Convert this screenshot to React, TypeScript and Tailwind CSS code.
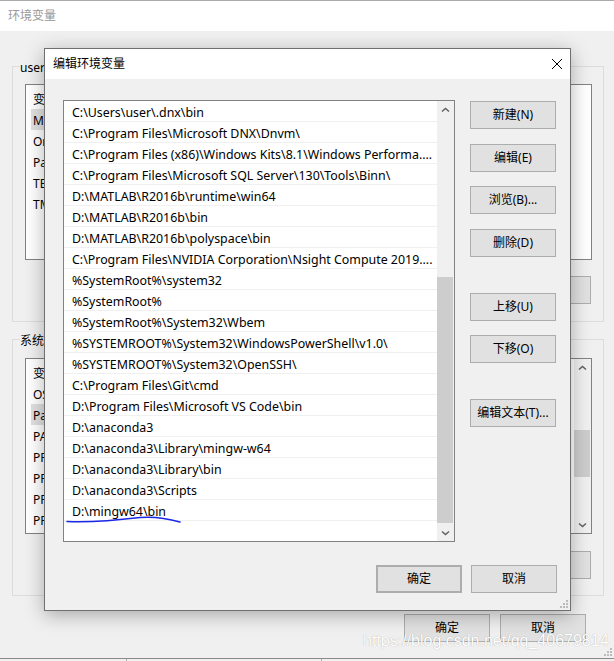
import React from 'react';

const paths = [
  'C:\\Users\\user\\.dnx\\bin',
  'C:\\Program Files\\Microsoft DNX\\Dnvm\\',
  'C:\\Program Files (x86)\\Windows Kits\\8.1\\Windows Performa....',
  'C:\\Program Files\\Microsoft SQL Server\\130\\Tools\\Binn\\',
  'D:\\MATLAB\\R2016b\\runtime\\win64',
  'D:\\MATLAB\\R2016b\\bin',
  'D:\\MATLAB\\R2016b\\polyspace\\bin',
  'C:\\Program Files\\NVIDIA Corporation\\Nsight Compute 2019....',
  '%SystemRoot%\\system32',
  '%SystemRoot%',
  '%SystemRoot%\\System32\\Wbem',
  '%SYSTEMROOT%\\System32\\WindowsPowerShell\\v1.0\\',
  '%SYSTEMROOT%\\System32\\OpenSSH\\',
  'C:\\Program Files\\Git\\cmd',
  'D:\\Program Files\\Microsoft VS Code\\bin',
  'D:\\anaconda3',
  'D:\\anaconda3\\Library\\mingw-w64',
  'D:\\anaconda3\\Library\\bin',
  'D:\\anaconda3\\Scripts',
  'D:\\mingw64\\bin',
];

const userVars: [string, string][] = [
  ['变量', '值'],
  ['MOZ_PLUGIN_PATH', 'C:\\Program Files (x86)\\Foxit Software\\plugins\\'],
  ['OneDrive', 'C:\\Users\\user\\OneDrive'],
  ['Path', 'C:\\Users\\user\\.dnx\\bin;C:\\Program Files\\Microsoft DNX\\Dnvm\\'],
  ['TEMP', 'C:\\Users\\user\\AppData\\Local\\Temp'],
  ['TMP', 'C:\\Users\\user\\AppData\\Local\\Temp'],
];

const sysVars: [string, string][] = [
  ['变量', '值'],
  ['OS', 'Windows_NT'],
  ['Path', 'C:\\Users\\user\\.dnx\\bin;C:\\Program Files\\Microsoft DNX\\'],
  ['PATHEXT', '.COM;.EXE;.BAT;.CMD;.VBS;.VBE;.JS;.JSE;.WSF;.WSH;.MSC'],
  ['PROCESSOR_ARCHITECTURE', 'AMD64'],
  ['PROCESSOR_IDENTIFIER', 'Intel64 Family 6 Model 158 Stepping 10'],
  ['PROCESSOR_LEVEL', '6'],
  ['PROCESSOR_REVISION', '9e0a'],
];

function Chevron({ down }: { down?: boolean }) {
  return (
    <svg width="9" height="6" viewBox="0 0 9 6">
      <path
        d={down ? 'M1 1.5 L4.5 4.5 L8 1.5' : 'M1 4.5 L4.5 1.5 L8 4.5'}
        fill="none"
        stroke="#606060"
        strokeWidth="1.5"
      />
    </svg>
  );
}

function Scrollbar({ thumb }: { thumb: string }) {
  return (
    <div className="w-[17px] h-full flex flex-col bg-[#f0f0f0]">
      <div className="h-[17px] flex items-center justify-center">
        <Chevron />
      </div>
      <div className="flex-1 flex flex-col">
        <div className={`bg-[#cdcdcd] mr-[1px] ${thumb}`} />
      </div>
      <div className="h-[17px] flex items-center justify-center">
        <Chevron down />
      </div>
    </div>
  );
}

function WinButton({ label, className = '' }: { label: string; className?: string }) {
  return (
    <div
      className={`w-[86px] h-[28px] flex items-center justify-center bg-[#e1e1e1] border border-[#adadad] whitespace-nowrap ${className}`}
    >
      {label}
    </div>
  );
}

// the background list only shows its first column's first letters; the rest sits under the dialog
function VarList({ rows, selected, scroll }: { rows: [string, string][]; selected: number; scroll?: boolean }) {
  return (
    <div className="h-[176px] border border-[#828282] bg-white flex overflow-hidden">
      <div className="flex-1 pt-[3px] flex flex-col">
        {rows.map(([name, value], i) => (
          <div key={i} className="h-[21px] flex items-center ml-[5px] whitespace-nowrap">
            <span
              className={`w-[180px] h-full flex items-center pl-[2px] pt-[2px] ${i === selected ? 'bg-[#e0e0e0]' : ''}`}
            >
              {name}
            </span>
            <span className="pl-[6px] pt-[2px]">{value}</span>
          </div>
        ))}
      </div>
      {scroll && <Scrollbar thumb="mt-[54px] h-[47px]" />}
    </div>
  );
}

function GroupBox({ label, children, className }: { label: string; children: React.ReactNode; className: string }) {
  return (
    <div className={`relative border border-[#dcdcdc] flex flex-col pl-[12px] pr-[11px] ${className}`}>
      <span className="absolute -top-[8px] left-[7px] leading-[17px] bg-[#f0f0f0] pr-[2px]">{label}</span>
      {children}
    </div>
  );
}

function BackgroundWindow() {
  return (
    <div className="flex flex-col h-full">
      <div className="h-[31px] bg-white border-t border-[#aaaaaa] flex items-center pl-[8px] text-[#999999]">
        环境变量
      </div>
      <div className="flex flex-col pl-[12px] pr-[10px] pt-[35px]">
        <GroupBox label="user 的用户变量(U)" className="h-[256px] pt-[17px]">
          <VarList rows={userVars} selected={1} />
          <div className="flex justify-end gap-[9px] mt-[16px] mr-[1px]">
            <WinButton label="新建(N)..." />
            <WinButton label="编辑(E)..." />
            <WinButton label="删除(D)" />
          </div>
        </GroupBox>
        <GroupBox label="系统变量(S)" className="h-[257px] pt-[18px] mt-[17px]">
          <VarList rows={sysVars} selected={2} scroll />
          <div className="flex justify-end gap-[9px] mt-[17px] mr-[1px]">
            <WinButton label="新建(W)..." />
            <WinButton label="编辑(I)..." />
            <WinButton label="删除(L)" />
          </div>
        </GroupBox>
        <div className="flex justify-end gap-[10px] mt-[18px] pr-[18px]">
          <WinButton label="确定" />
          <WinButton label="取消" />
        </div>
      </div>
      <div className="mt-[16px] flex-1 border-t border-[#8a8a8a] flex">
        <div className="w-[127px] border-r border-[#b0b0b0]" />
        <div className="w-[195px] border-r border-[#b0b0b0]" />
      </div>
    </div>
  );
}

function Grip({ className }: { className: string }) {
  return (
    <svg width="8" height="8" viewBox="0 0 8 8" className={className}>
      <g fill="#bcbcbc">
        <rect x="6" y="0" width="2" height="2" />
        <rect x="3" y="3" width="2" height="2" />
        <rect x="6" y="3" width="2" height="2" />
        <rect x="0" y="6" width="2" height="2" />
        <rect x="3" y="6" width="2" height="2" />
        <rect x="6" y="6" width="2" height="2" />
      </g>
    </svg>
  );
}

function EditDialog() {
  return (
    <div className="absolute left-[44px] top-[48px] w-[527px] h-[563px] border border-[#707070] bg-[#f0f0f0] flex flex-col shadow-[0_4px_18px_rgba(0,0,0,0.3)]">
      <div className="h-[30px] bg-white flex items-center justify-between pl-[8px] pr-[8px]">
        <span>编辑环境变量</span>
        <svg width="10" height="10" viewBox="0 0 10 10">
          <path d="M0 0 L10 10 M10 0 L0 10" stroke="#000" strokeWidth="1" />
        </svg>
      </div>
      <div className="flex flex-col pt-[21px] pl-[18px] pr-[13px]">
        <div className="flex gap-[15px]">
          <div className="w-[392px] h-[442px] border border-[#828282] bg-white flex">
            <div className="w-[373px] flex flex-col text-[12.4px]">
              {paths.map((p, i) => (
                <div
                  key={i}
                  className="h-[21px] shrink-0 border-b border-[#f0f0f0] flex items-center pl-[8px] pt-[4px] whitespace-nowrap overflow-hidden"
                >
                  {p}
                </div>
              ))}
            </div>
            <Scrollbar thumb="mt-[159px] h-[246px]" />
          </div>
          <div className="flex flex-col">
            <WinButton label="新建(N)" className="mt-[1px]" />
            <WinButton label="编辑(E)" className="mt-[15px]" />
            <WinButton label="浏览(B)..." className="mt-[14px]" />
            <WinButton label="删除(D)" className="mt-[15px]" />
            <WinButton label="上移(U)" className="mt-[36px]" />
            <WinButton label="下移(O)" className="mt-[14px]" />
            <WinButton label="编辑文本(T)..." className="mt-[36px]" />
          </div>
        </div>
        <div className="flex justify-end gap-[9px] mt-[23px]">
          <WinButton label="确定" className="border-2 border-[#0078d7]" />
          <WinButton label="取消" />
        </div>
      </div>
      <Grip className="absolute right-[2px] bottom-[2px]" />
    </div>
  );
}

export default function App() {
  return (
    <div className="relative w-[614px] h-[661px] overflow-hidden bg-[#f0f0f0] text-[12px] text-black font-['Noto_Sans','Noto_Sans_CJK_SC',sans-serif]">
      <BackgroundWindow />
      <EditDialog />
      <Grip className="absolute right-[2px] bottom-[5px]" />
      <svg className="absolute left-0 top-0 pointer-events-none" width="614" height="661">
        <path
          d="M67 521.5 C 90 522.5, 115 520.5, 140 517.5 C 152 516.5, 166 518, 180 522"
          fill="none"
          stroke="#1a27e6"
          strokeWidth="1.5"
          strokeLinecap="round"
        />
      </svg>
      <div className="absolute left-[363px] top-[629px] text-[16px] text-white font-['Liberation_Sans',sans-serif] [text-shadow:0_0_1px_rgba(0,0,0,0.35)]">
        https://blog.csdn.net/qq_40679814
      </div>
    </div>
  );
}
